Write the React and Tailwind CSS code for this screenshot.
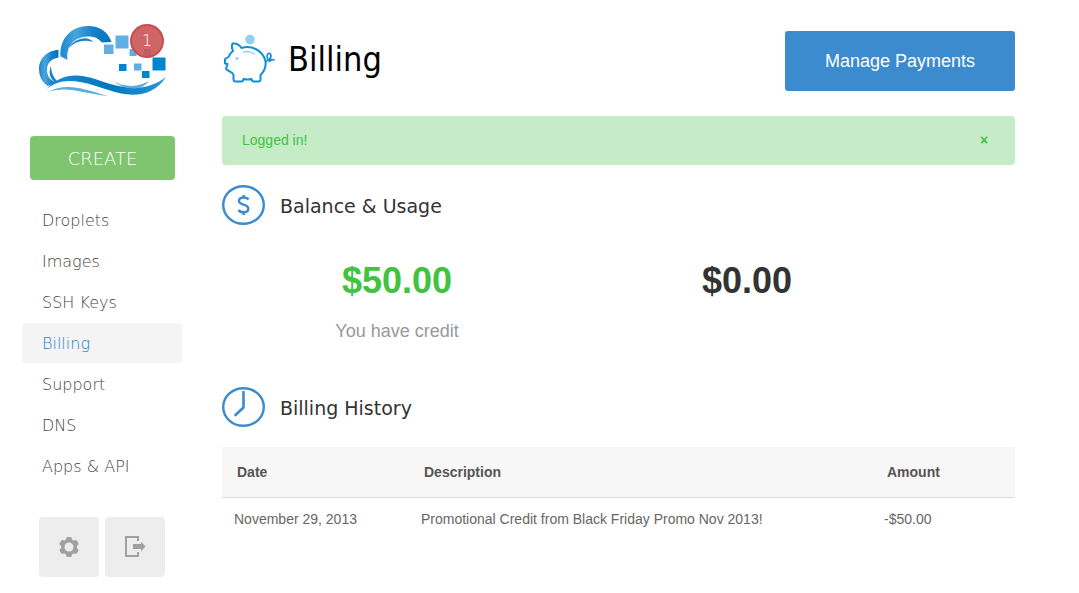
import { useState } from "react";
import clsx from "clsx";

const NAV_ITEMS = [
  "Droplets",
  "Images",
  "SSH Keys",
  "Billing",
  "Support",
  "DNS",
  "Apps & API",
];

const HISTORY = [
  {
    date: "November 29, 2013",
    description: "Promotional Credit from Black Friday Promo Nov 2013!",
    amount: "-$50.00",
  },
];

const CloudLogo = () => (
  <svg viewBox="0 0 130 76" className="w-[130px] h-[76px]" aria-hidden="true">
    <defs>
      <linearGradient id="cloud" x1="0" y1="0" x2="1" y2="0">
        <stop offset="0" stopColor="#1a86cf" />
        <stop offset="0.3" stopColor="#4ba5de" />
        <stop offset="0.65" stopColor="#1580c8" />
        <stop offset="1" stopColor="#0075bd" />
      </linearGradient>
      <linearGradient id="wave" x1="0" y1="0" x2="1" y2="0">
        <stop offset="0" stopColor="#1f8dd6" />
        <stop offset="0.5" stopColor="#0077be" />
        <stop offset="1" stopColor="#2a95d8" />
      </linearGradient>
    </defs>
    {/* Cloud outline */}
    <path
      d="M22.500 34C21 15 34 3 50 3C62 3 70 9 73.500 19L64 19.500C60 15 56 13 50 13.500C36 14 28 23 29.500 37L23 33.500Z"
      fill="url(#cloud)"
    />
    <path
      d="M20.500 27C9 27 1 36 1 46C1 55 6 61 10 63L18 60C12 57 9 53 9 47C9 40 13 36 20.500 34.500Z"
      fill="url(#cloud)"
    />
    <path d="M30 25C37 15 50 12 55 19C46 16 38 18 30 25Z" fill="#1683ca" />
    <path d="M13 43C10 50 12 56 18 60L19 58C15 54 13 49 13 43Z" fill="#1683ca" />
    {/* Waves */}
    <path
      d="M9 66C22 51 38 50 57 56C84 66 107 70 128 54C118 70 101 74 83 70.500C61 65 49 58 31 58C22 58 15 61 9 66Z"
      fill="url(#wave)"
    />
    <path d="M9 69.500C28 59 43 65 70 73C46 71 29 62 9 69.500Z" fill="#5aace1" />
    <path d="M75 58C88 65 101 64 111 58C104 68 88 68 75 58Z" fill="#5aace1" />
    {/* Pixels */}
    <path
      fill="#60aee2"
      d="M66 21.500h9.500v9.500h-9.500zM77.500 12.500h13v13h-13zM91.500 26h7v7h-7zM106 26h7v7h-7zM96 40.500h7.500v7h-7.500z"
    />
    <path
      fill="#0086d1"
      d="M81 41h7.500v7h-7.500zM104 48h7.500v7h-7.500zM114.500 34.500h13v13h-13z"
    />
  </svg>
);

const PiggyIcon = () => (
  <svg
    viewBox="-1.500 0 54 50"
    className="w-[54px] h-[50px] shrink-0"
    fill="none"
    aria-hidden="true"
  >
    <circle cx="26.500" cy="5.500" r="4.800" fill="#90d0f0" />
    <path
      d="M9 9.500C13 9 16 11 18 14C28 11 39 16 42 27C43 34 40 38 37 41L37 45.500Q37 47.500 35 47.500L30 47.500Q28.500 47.500 28 45Q24 46 20 45Q19.500 47.500 18 47.500L12 47.500Q10 47.500 10 45L10 41C9 38 6 38 4 36L2.500 35L4 30L1.500 29.500L1.500 25L5 23C6 20 8 18 9.500 17C8 14 8 12 9 9.500Z"
      stroke="#118fd4"
      strokeWidth="2"
      strokeLinejoin="round"
    />
    <path
      d="M42 27.500C46 27 49 22 46.500 19.500C43.500 18 42.500 24 45 26.500C46.500 28 47.500 26 48 25.500L50.500 26"
      stroke="#118fd4"
      strokeWidth="1.700"
      strokeLinecap="round"
    />
    <path
      d="M20 18C24 17 28 18 31 20"
      stroke="#90d0f0"
      strokeWidth="1.500"
      strokeLinecap="round"
    />
    <circle cx="13.500" cy="24.500" r="1.500" fill="#90d0f0" />
  </svg>
);

const DollarIcon = () => (
  <svg
    viewBox="0 0 43 40"
    className="w-[43px] h-10 shrink-0"
    fill="none"
    stroke="#3b8bce"
    aria-hidden="true"
  >
    <ellipse cx="21.500" cy="20" rx="20.300" ry="18.800" strokeWidth="2.400" />
    <path
      d="M26.500 14.500C25.500 13 23.500 12.500 21.500 12.500C18.500 12.500 17 14 17 16C17 20.500 26.300 18.700 26.300 23.500C26.300 26 24.300 27.300 21.500 27.300C19.500 27.300 17.500 26.500 16.500 25M21.700 10v3M21.700 27v3"
      strokeWidth="2.400"
    />
  </svg>
);

const ClockIcon = () => (
  <svg
    viewBox="0 0 43 40"
    className="w-[43px] h-10 shrink-0"
    fill="none"
    stroke="#3b8bce"
    aria-hidden="true"
  >
    <ellipse cx="21.500" cy="20" rx="20.300" ry="18.800" strokeWidth="2.400" />
    <path
      d="M21.500 5V20.500L13.500 28"
      strokeWidth="2.600"
      strokeLinecap="round"
      strokeLinejoin="round"
    />
  </svg>
);

const GearIcon = () => (
  <svg viewBox="0 0 20 20" className="size-5" aria-hidden="true">
    <g fill="#a0a0a0">
      <circle cx="10" cy="10" r="8" />
      <rect x="7" y="0" width="6" height="20" rx="2" />
      <rect x="7" y="0" width="6" height="20" rx="2" transform="rotate(60 10 10)" />
      <rect x="7" y="0" width="6" height="20" rx="2" transform="rotate(120 10 10)" />
    </g>
    <circle cx="10" cy="10" r="4.500" fill="#ededed" />
  </svg>
);

const LogoutIcon = () => (
  <svg viewBox="0 0 22 22" className="size-[22px]" fill="#a0a0a0" aria-hidden="true">
    <path d="M1 0H15V5H13V2H3V19H13V16H15V21H1Z" />
    <path d="M9 8H17V5.500L21.500 10.500L17 15.500V13H9Z" />
  </svg>
);

const SectionTitle = ({ icon, children }) => (
  <div className="flex items-center gap-[15px]">
    {icon}
    <h2 className="pt-0.5 font-['DejaVu_Sans',sans-serif] text-[19px] leading-7 text-[#333]">
      {children}
    </h2>
  </div>
);

const Sidebar = () => (
  <aside className="w-[182px] shrink-0 pl-[22px] pt-[23px] font-['DejaVu_Sans',sans-serif] font-extralight">
    <a href="#home" aria-label="Home" className="relative block w-[130px] ml-4">
      <CloudLogo />
      <span className="absolute top-px left-[92px] size-[34px] flex items-center justify-center rounded-full border-2 border-[#c44c50]/90 bg-[#cb5356]/90 text-base text-white">
        1
      </span>
    </a>

    <button
      type="button"
      className="block w-[145px] h-11 mt-[37px] ml-2 pt-0.5 rounded bg-[#7fc46f] text-lg text-white"
    >
      CREATE
    </button>

    <nav className="mt-5 flex flex-col gap-px">
      {NAV_ITEMS.map((item) => (
        <a
          key={item}
          href="#nav"
          className={clsx(
            "h-10 px-5 pt-0.5 flex items-center rounded",
            item === "Billing" ? "bg-[#f4f4f4] text-[#1682d8]" : "text-[#444]"
          )}
        >
          {item}
        </a>
      ))}
    </nav>

    <div className="mt-[31px] ml-[17px] flex gap-1.5">
      <button
        type="button"
        aria-label="Settings"
        className="size-[60px] flex items-center justify-center rounded bg-[#ededed]"
      >
        <GearIcon />
      </button>
      <button
        type="button"
        aria-label="Log out"
        className="size-[60px] flex items-center justify-center rounded bg-[#ededed]"
      >
        <LogoutIcon />
      </button>
    </div>
  </aside>
);

const Alert = ({ onClose, children }) => (
  <div
    role="status"
    className="mt-[25px] h-[49px] px-5 pb-0.5 flex items-center justify-between rounded bg-[#c5ecc7] text-sm text-[#3fc340]"
  >
    <span>{children}</span>
    <button
      type="button"
      aria-label="Close"
      onClick={onClose}
      className="w-[22px] text-sm font-bold"
    >
      ×
    </button>
  </div>
);

const App = () => {
  const [showAlert, setShowAlert] = useState(true);

  return (
    <div className="flex min-h-screen bg-white font-['Liberation_Sans',Arial,sans-serif]">
      <Sidebar />

      <main className="flex-1 min-w-0 pl-10 pr-16 pt-[31px]">
        <header className="flex items-center justify-between">
          <div className="flex items-center gap-3 pb-1">
            <PiggyIcon />
            <h1 className="font-['DejaVu_Sans_Condensed','DejaVu_Sans',sans-serif] text-[34px] leading-10 text-black">
              Billing
            </h1>
          </div>
          <button
            type="button"
            className="w-[230px] h-[60px] rounded-[3px] bg-[#3b8bce] text-lg text-white"
          >
            Manage Payments
          </button>
        </header>

        {showAlert && (
          <Alert onClose={() => setShowAlert(false)}>Logged in!</Alert>
        )}

        {/* Balance */}
        <section className="mt-5">
          <SectionTitle icon={<DollarIcon />}>Balance &amp; Usage</SectionTitle>
          <div className="mt-9 flex text-center">
            <div className="w-[350px]">
              <p className="text-4xl font-bold text-[#3fc340]">$50.00</p>
              <p className="mt-4 text-lg text-[#999]">You have credit</p>
            </div>
            <div className="w-[350px]">
              <p className="text-4xl font-bold text-[#333]">$0.00</p>
            </div>
          </div>
        </section>

        {/* History */}
        <section className="mt-[42px]">
          <SectionTitle icon={<ClockIcon />}>Billing History</SectionTitle>
          <table className="mt-5 w-full table-fixed text-left text-sm">
            <thead>
              <tr className="h-[50px] border-b border-[#ddd] bg-[#f7f7f7] text-[#555]">
                <th className="w-[187px] px-[15px]">Date</th>
                <th className="px-[15px]">Description</th>
                <th className="w-[143px] px-[15px]">Amount</th>
              </tr>
            </thead>
            <tbody>
              {HISTORY.map((row) => (
                <tr key={row.date} className="h-[43px] text-[#666]">
                  <td className="px-3">{row.date}</td>
                  <td className="px-3">{row.description}</td>
                  <td className="px-3">{row.amount}</td>
                </tr>
              ))}
            </tbody>
          </table>
        </section>
      </main>
    </div>
  );
};

export default App;
